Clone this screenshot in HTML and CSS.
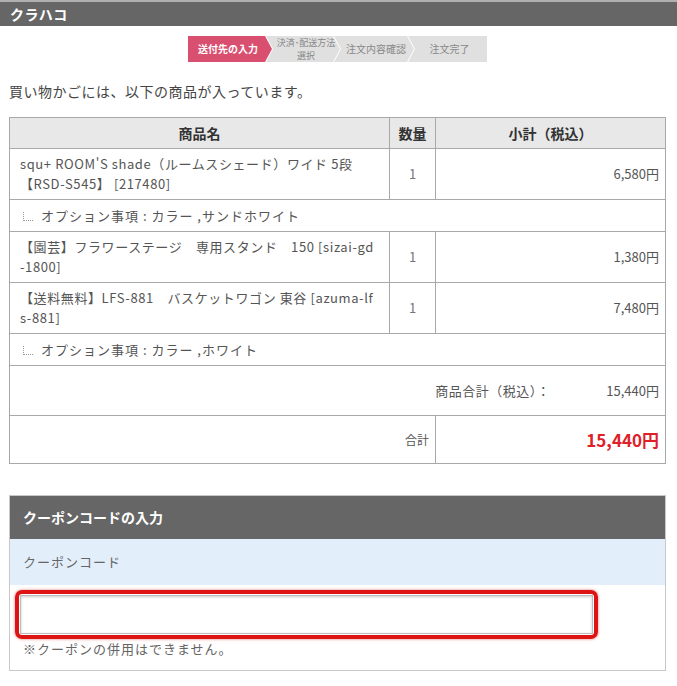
FILE: index.html
```html
<!DOCTYPE html>
<html lang="ja">
<head>
<meta charset="utf-8">
<title>クラハコ</title>
<link rel="stylesheet" href="styles.css">
</head>
<body>
<header class="topbar">クラハコ</header>
<div class="page">
  <div class="steps">
    <div class="step step-active">送付先の入力</div>
    <div class="step step-two">決済･配送方法<br>選択</div>
    <div class="step">注文内容確認</div>
    <div class="step step-last">注文完了</div>
  </div>
  <p class="lead">買い物かごには、以下の商品が入っています。</p>
  <table class="cart">
    <thead>
      <tr>
        <th class="c-name">商品名</th>
        <th class="c-qty">数量</th>
        <th class="c-sub">小計（税込）</th>
      </tr>
    </thead>
    <tbody>
      <tr class="item">
        <td class="c-name">squ+ ROOM'S shade（ルームスシェード）ワイド 5段<br>【RSD-S545】 [217480]</td>
        <td class="c-qty">1</td>
        <td class="c-sub">6,580円</td>
      </tr>
      <tr class="opt">
        <td colspan="3"><span class="tree"></span>オプション事項 : カラー ,サンドホワイト</td>
      </tr>
      <tr class="item">
        <td class="c-name">【園芸】フラワーステージ　専用スタンド　150 [sizai-gd<br>-1800]</td>
        <td class="c-qty">1</td>
        <td class="c-sub">1,380円</td>
      </tr>
      <tr class="item">
        <td class="c-name">【送料無料】LFS-881　バスケットワゴン 東谷 [azuma-lf<br>s-881]</td>
        <td class="c-qty">1</td>
        <td class="c-sub">7,480円</td>
      </tr>
      <tr class="opt">
        <td colspan="3"><span class="tree"></span>オプション事項 : カラー ,ホワイト</td>
      </tr>
      <tr class="subtotal">
        <td colspan="3"><span class="sub-label">商品合計（税込）：</span><span class="sub-val">15,440円</span></td>
      </tr>
      <tr class="total">
        <td colspan="2" class="total-label">合計</td>
        <td class="total-val">15,440円</td>
      </tr>
    </tbody>
  </table>

  <section class="coupon">
    <h2 class="coupon-head">クーポンコードの入力</h2>
    <div class="coupon-label">クーポンコード</div>
    <div class="coupon-body">
      <div class="mark">
        <input class="coupon-input" type="text" aria-label="クーポンコード">
      </div>
      <p class="note">※クーポンの併用はできません。</p>
    </div>
  </section>
</div>
</body>
</html>
```
FILE: styles.css
```css
* { box-sizing: border-box; }
html, body { margin: 0; padding: 0; background: #fff; }
body {
  font-family: "Noto Sans CJK JP", "Noto Sans", sans-serif;
  color: #444;
  font-size: 13px;
}
.topbar {
  height: 26px;
  border-top: 2px solid #b0b0b0;
  background: #666;
  color: #fff;
  font-weight: bold;
  font-size: 14px;
  line-height: 24px;
  padding-left: 10px;
  letter-spacing: 0.5px;
}
.page { padding: 0 11px 0 9px; }

.steps {
  display: flex;
  width: 299px;
  height: 26px;
  margin: 10px 0 0 179px;
}
.step {
  height: 26px;
  background: #e0e0e0;
  color: #888;
  font-size: 10px;
  line-height: 26px;
  text-align: center;
  margin-left: -6px;
  clip-path: polygon(0 0, calc(100% - 7px) 0, 100% 50%, calc(100% - 7px) 100%, 0 100%, 7px 50%);
  flex: none;
}
.step-active {
  width: 84px;
  margin-left: 0;
  background: #d94f70;
  color: #fff;
  font-weight: bold;
  clip-path: polygon(0 0, calc(100% - 7px) 0, 100% 50%, calc(100% - 7px) 100%, 0 100%);
  padding-right: 4px;
}
.step-two { width: 74px; font-size: 9px; line-height: 13px; padding: 0 0 0 6px; }
.step:nth-child(3) { width: 80px; padding-left: 4px; }
.step-last {
  width: 79px;
  clip-path: polygon(0 0, 100% 0, 100% 100%, 0 100%, 7px 50%);
  padding-left: 4px;
}

.lead {
  margin: 19px 0 0 0;
  font-size: 14px;
  line-height: 20px;
  color: #444;
  letter-spacing: 0.5px;
}

.cart {
  width: 100%;
  margin-top: 16px;
  border-collapse: collapse;
  border: 1px solid #a8a8a8;
}
.cart th, .cart td {
  border: 1px solid #a8a8a8;
  line-height: 20px;
}
.cart th {
  background: #e8e8e8;
  height: 31px;
  font-size: 14px;
  font-weight: bold;
  color: #333;
  padding: 0;
}
.cart .c-name { width: 380px; }
.cart .c-qty { width: 46px; }
.item td { height: 51px; padding: 4px 6px 5px 10px; font-size: 13px; color: #555; vertical-align: middle; }
.item td.c-name { padding-left: 10px; letter-spacing: 0.6px; white-space: nowrap; overflow: hidden; max-width: 380px; }
.item td.c-qty { text-align: center; padding: 0; color: #777; }
.item td.c-sub { text-align: right; padding-right: 6px; color: #555; }
.opt td { height: 32px; padding: 0 10px 0 13px; color: #555; font-size: 13px; letter-spacing: 1px; }
.tree {
  display: inline-block;
  width: 10px;
  height: 9px;
  border-left: 1px dotted #999;
  border-bottom: 1px dotted #999;
  margin-right: 8px;
  vertical-align: 0;
}
.subtotal td {
  height: 50px;
  text-align: right;
  padding: 0 6px 0 0;
  color: #555;
}
.sub-label { margin-right: 56px; letter-spacing: 0.5px; }
.total td { height: 48px; }
.total-label { text-align: right; padding-right: 6px; color: #555; font-size: 12px; }
.total-val {
  text-align: right;
  padding-right: 6px;
  color: #e02028;
  font-weight: bold;
  font-size: 17px;
}

.coupon {
  margin-top: 31px;
  border: 1px solid #c8c8c8;
}
.coupon-head {
  margin: 0;
  height: 43px;
  background: #666;
  color: #fff;
  font-size: 14px;
  font-weight: bold;
  line-height: 43px;
  padding-left: 13px;
}
.coupon-label {
  height: 46px;
  line-height: 46px;
  background: #e3eefb;
  padding-left: 13px;
  color: #666;
  font-size: 13px;
  letter-spacing: 1px;
}
.coupon-body { padding: 5px 0 11px 5px; }
.mark {
  width: 583px;
  height: 49px;
  border: 4px solid #dc1414;
  border-radius: 7px;
  box-shadow: 0 0 3px rgba(220, 20, 20, 0.6);
  padding: 1px;
}
.coupon-input {
  display: block;
  width: 100%;
  height: 100%;
  border: 1px solid #bbb;
  box-shadow: inset 0 1px 3px rgba(0,0,0,0.2);
  background: #fff;
  margin: 0;
  padding: 0 6px;
  font-size: 13px;
}
.note {
  margin: 0 0 0 8px;
  font-size: 13px;
  line-height: 20px;
  color: #666;
  letter-spacing: 1px;
}
```
